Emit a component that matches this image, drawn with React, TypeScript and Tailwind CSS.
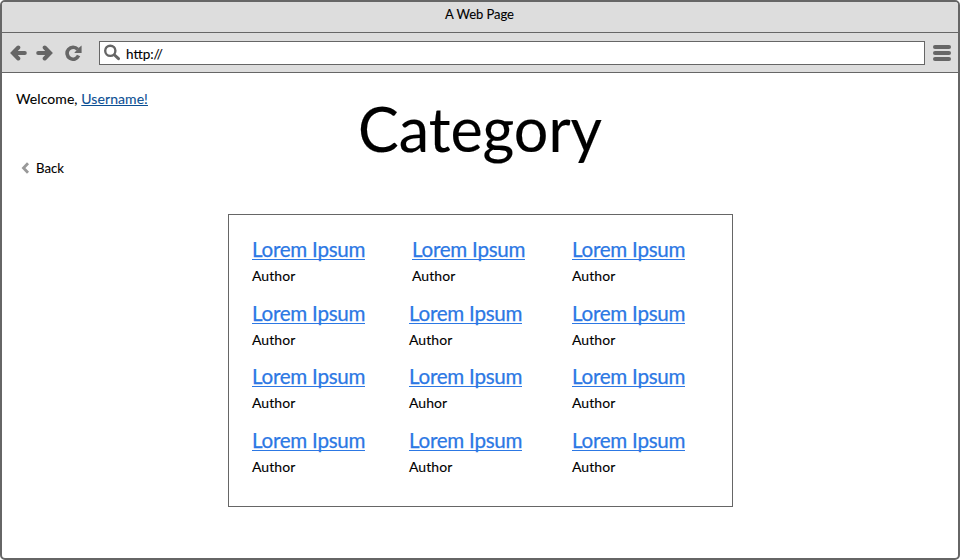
type Entry = { title: string; author: string };

const columns: { className: string; entries: Entry[] }[] = [
  {
    className: "w-[157px]",
    entries: [
      { title: "Lorem Ipsum", author: "Author" },
      { title: "Lorem Ipsum", author: "Author" },
      { title: "Lorem Ipsum", author: "Author" },
      { title: "Lorem Ipsum", author: "Author" },
    ],
  },
  {
    className: "w-[163px]",
    entries: [
      { title: "Lorem Ipsum", author: "Author" },
      { title: "Lorem Ipsum", author: "Author" },
      { title: "Lorem Ipsum", author: "Auhor" },
      { title: "Lorem Ipsum", author: "Author" },
    ],
  },
  {
    className: "w-[130px]",
    entries: [
      { title: "Lorem Ipsum", author: "Author" },
      { title: "Lorem Ipsum", author: "Author" },
      { title: "Lorem Ipsum", author: "Author" },
      { title: "Lorem Ipsum", author: "Author" },
    ],
  },
];

// The second row sits one pixel closer to the third.
const rowHeights = ["h-[64px]", "h-[63px]", "h-[64px]", "h-[64px]"];

function ArrowLeft({ className = "" }: { className?: string }) {
  return (
    <svg className={className} width="17" height="16" viewBox="0 0 17 16" fill="none" stroke="#666" strokeWidth="4" strokeLinecap="round">
      <path d="M8.3 2.5 L2.9 8 L8.3 13.5" strokeLinejoin="miter" />
      <path d="M4 8 H14.8" />
    </svg>
  );
}

function Toolbar() {
  return (
    <div className="flex h-[40px] shrink-0 items-center border-b border-[#666] bg-[#ddd]">
      <ArrowLeft className="ml-[8px]" />
      <ArrowLeft className="ml-[9px] rotate-180" />
      <svg className="ml-[12px]" width="17" height="16" viewBox="0 0 17 16" fill="none">
        <path d="M12.6 4.2 A6 6 0 1 0 13.6 10.6" stroke="#666" strokeWidth="3.6" />
        <path d="M16.6 0.6 V8 H9.2 L11.8 5 L13 3.6 Z" fill="#666" />
      </svg>
      <div className="ml-[17px] flex h-[24px] w-[826px] items-center border border-[#666] bg-white">
        <svg className="ml-[4px] mt-[-1px]" width="17" height="17" viewBox="0 0 17 17" fill="none" stroke="#666">
          <circle cx="6.3" cy="6.8" r="5.1" strokeWidth="2.4" />
          <path d="M10.5 11 L14.5 14.7" strokeWidth="3" strokeLinecap="round" />
        </svg>
        <span className="ml-[5px] pt-[2px] text-[13.5px] leading-[18px] [-webkit-text-stroke:0.1px_black]">http://</span>
      </div>
      <div className="ml-[8px] flex w-[18px] flex-col gap-[2px]">
        <div className="h-[4px] rounded-[2px] bg-[#666]" />
        <div className="h-[4px] rounded-[2px] bg-[#666]" />
        <div className="h-[4px] rounded-[2px] bg-[#666]" />
      </div>
    </div>
  );
}

export default function App() {
  return (
    <div className="flex h-[560px] w-[960px] flex-col overflow-hidden rounded-[5px] border-2 border-[#666] bg-white font-['Lato',sans-serif] text-[14px] text-black">
      <div className="h-[31px] shrink-0 border-b border-[#666] bg-[#ddd] pr-[1px] pt-[3px] text-center text-[13px] leading-[18px] tracking-[-0.05px] [-webkit-text-stroke:0.1px_black]">
        A Web Page
      </div>
      <Toolbar />
      <div className="flex h-[141px] shrink-0">
        <div className="w-[356px] pl-[14px] pt-[17px]">
          <p className="leading-[18px] tracking-[0.08px] [-webkit-text-stroke:0.1px]">
            Welcome, <a className="text-[#0b4f94] underline underline-offset-[1px]">Username!</a>
          </p>
          <div className="mt-[51px] flex items-center pl-[5px] leading-[18px]">
            <svg width="9" height="12" viewBox="0 0 9 12" fill="none" stroke="#999" strokeWidth="2.8">
              <path d="M7 1.3 L2.5 6 L7 10.7" />
            </svg>
            <span className="ml-[6px] text-[13.2px] [-webkit-text-stroke:0.1px]">Back</span>
          </div>
        </div>
        <h1 className="pt-[20px] text-[61px] leading-[72px] [-webkit-text-stroke:0.15px]">Category</h1>
      </div>
      <div className="ml-[226px] flex h-[293px] w-[505px] border border-[#666] pl-[23px] pt-[22px]">
        {columns.map((column, c) => (
          <div key={c} className={column.className}>
            {column.entries.map((entry, r) => (
              <div key={r} className={`${rowHeights[r]} ${c === 1 && r === 0 ? "pl-[3px]" : ""}`}>
                <a className="block h-[23px] w-[113px] whitespace-nowrap border-b border-[#2c78e4] text-[20.6px] leading-[24px] tracking-[-0.27px] text-[#2c78e4] [-webkit-text-stroke:0.25px]">
                  {entry.title}
                </a>
                <p className="mt-[7px] leading-[18px] tracking-[0.05px] [-webkit-text-stroke:0.1px]">{entry.author}</p>
              </div>
            ))}
          </div>
        ))}
      </div>
    </div>
  );
}
